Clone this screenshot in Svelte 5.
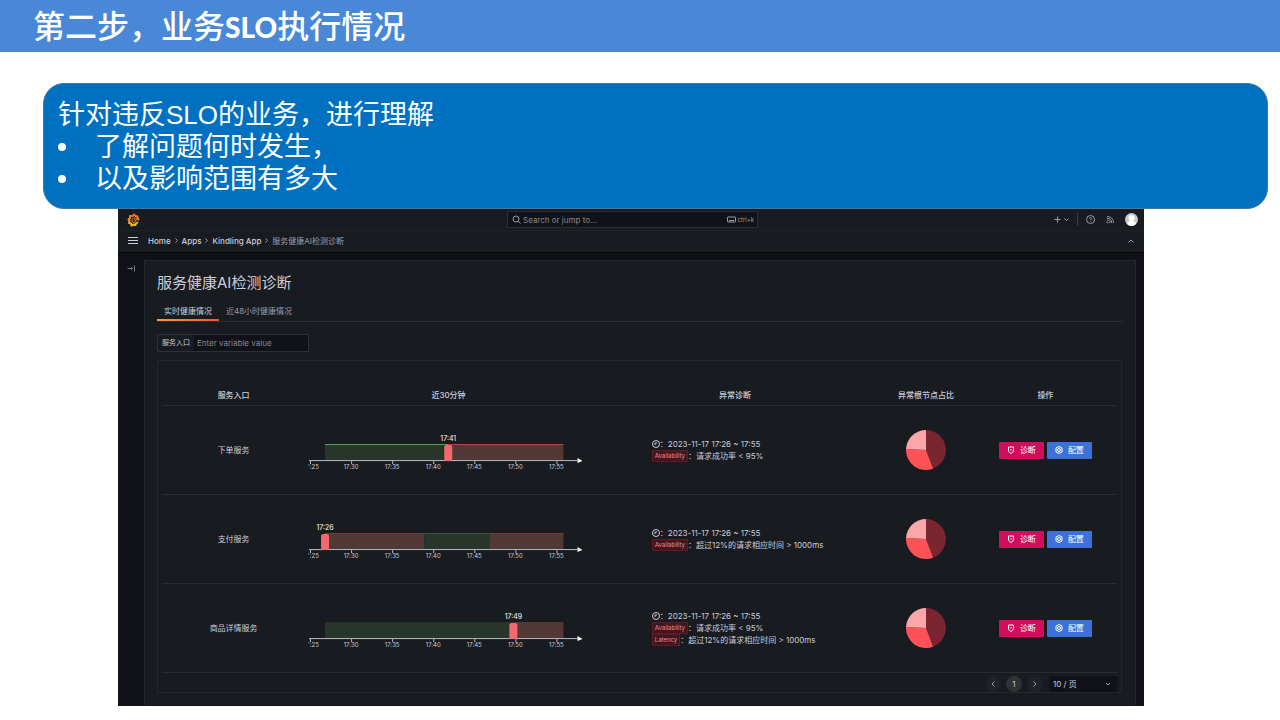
<script>
  const ticks = ["17:25", "17:30", "17:35", "17:40", "17:45", "17:50", "17:55"];

  const rows = [
    {
      name: "下单服务",
      at: "17:41",
      marker: 143,
      edge: 1,
      bands: [
        { from: 20, to: 143, ok: true },
        { from: 143, to: 258, ok: false },
      ],
      causes: [{ tag: "Availability", text: "请求成功率 < 95%" }],
    },
    {
      name: "支付服务",
      at: "17:26",
      marker: 20,
      edge: 0.35,
      bands: [
        { from: 20, to: 119, ok: false },
        { from: 119, to: 184, ok: true },
        { from: 184, to: 258, ok: false },
      ],
      causes: [{ tag: "Availability", text: "超过12%的请求相应时间 > 1000ms" }],
    },
    {
      name: "商品详情服务",
      at: "17:49",
      marker: 208,
      edge: 0,
      bands: [
        { from: 20, to: 208, ok: true },
        { from: 208, to: 258, ok: false },
      ],
      causes: [
        { tag: "Availability", text: "请求成功率 < 95%" },
        { tag: "Latency", text: "超过12%的请求相应时间 > 1000ms" },
      ],
    },
  ];

  let entry = $state("");
  let pageSize = $state("10");
</script>

<header class="banner">
  <h1>第二步，业务<span>SLO</span>执行情况</h1>
</header>

<section class="callout">
  <p>针对违反<span>SLO</span>的业务，进行理解</p>
  <ul>
    <li>了解问题何时发生，</li>
    <li>以及影响范围有多大</li>
  </ul>
</section>

<div class="app">
  <div class="topbar">
    <a class="logo" href="#home" aria-label="Grafana">
      <svg width="13" height="14" viewBox="0 0 26 28">
        <defs>
          <linearGradient id="flame" x1="0" y1="28" x2="0" y2="0" gradientUnits="userSpaceOnUse">
            <stop offset="0" stop-color="#fbca0a" />
            <stop offset="0.5" stop-color="#f7902a" />
            <stop offset="1" stop-color="#f05a28" />
          </linearGradient>
        </defs>
        <path
          fill="none"
          stroke="url(#flame)"
          stroke-width="4"
          stroke-linejoin="round"
          stroke-linecap="round"
          d="M21 19 L18 21 L17 24 L13 23 L9 25 L8 21 L4 20 L5 16 L3 13 L6 10 L6 6 L11 6 L14 3 L17 6 L21 7 L21 10 L23 13"
        />
        <path
          fill="none"
          stroke="url(#flame)"
          stroke-width="2"
          stroke-linecap="round"
          d="M20 13 C18 8 11 9 10 14 C9 19 16 21 18 16 C18 13 15 12 14 14"
        />
      </svg>
    </a>
    <label class="search">
      <svg width="9" height="9" viewBox="0 0 18 18" class="line">
        <circle cx="8" cy="8" r="6" />
        <path d="M12.500 12.500 L17 17" />
      </svg>
      <input type="search" placeholder="Search or jump to..." aria-label="Search or jump to" />
      <svg width="9" height="7" viewBox="0 0 18 14" class="line">
        <rect x="1" y="2" width="16" height="10" rx="1" />
        <path d="M4 9 H14" />
      </svg>
      <kbd>ctrl+k</kbd>
    </label>
    <div class="tools">
      <button class="add" aria-label="New">
        <svg width="7" height="7" viewBox="0 0 14 14" class="line"><path d="M7 1 V13 M1 7 H13" /></svg>
        <svg width="5" height="5" viewBox="0 0 10 10" class="line"><path d="M1 3 L5 7 L9 3" /></svg>
      </button>
      <i class="rule"></i>
      <button aria-label="Help">
        <svg width="9" height="9" viewBox="0 0 18 18" class="line">
          <circle cx="9" cy="9" r="8" />
          <path d="M7 7 C7 4.500 11 4.500 11 7 C11 9 9 8.500 9 10.500 M9 12.500 V13.500" />
        </svg>
      </button>
      <button aria-label="News">
        <svg width="8" height="8" viewBox="0 0 16 16" class="line">
          <path d="M2 8 C6 8 8 10 8 14 M2 4.500 C8 4.500 11.500 8 11.500 14 M2 1 C10 1 15 6 15 14" />
          <circle cx="3" cy="13" r="1" />
        </svg>
      </button>
      <button aria-label="Profile">
        <svg width="13" height="13" viewBox="0 0 26 26">
          <circle cx="13" cy="13" r="13" fill="#c8c8c8" />
          <circle cx="13" cy="10" r="6" fill="#fff" />
          <path d="M4 22 C5 17 9 16 13 16 C17 16 21 17 22 22 C17 27 9 27 4 22" fill="#fff" />
        </svg>
      </button>
    </div>
  </div>

  <nav class="crumbs" aria-label="Breadcrumb">
    <button aria-label="Menu">
      <svg width="10" height="7" viewBox="0 0 10 7" fill="#ccccdc">
        <path d="M0 0 H10 V1 H0 Z M0 3 H10 V4 H0 Z M0 6 H10 V7 H0 Z" />
      </svg>
    </button>
    {#each ["Home", "Apps", "Kindling App"] as crumb}
      <a href="#{crumb}">{crumb}</a>
      <svg width="3" height="5" viewBox="0 0 6 10" class="line"><path d="M1 1 L5 5 L1 9" /></svg>
    {/each}
    <span>服务健康AI检测诊断</span>
    <button class="fold" aria-label="Collapse">
      <svg width="6" height="6" viewBox="0 0 12 12" class="line"><path d="M1 9 L6 4 L11 9" /></svg>
    </button>
  </nav>

  <div class="body">
    <aside>
      <button aria-label="Open navigation">
        <svg width="8" height="7" viewBox="0 0 16 14" class="line dim">
          <path d="M1 7 H11 M8 4 L11 7 L8 10 M15 1 V13" />
        </svg>
      </button>
    </aside>

    <main>
      <h2>服务健康AI检测诊断</h2>

      <div class="tabs" role="tablist">
        <button role="tab" aria-selected="true" class="on">实时健康情况</button>
        <button role="tab" aria-selected="false">近48小时健康情况</button>
      </div>

      <div class="filter">
        <label for="entry">服务入口</label>
        <input id="entry" type="text" placeholder="Enter variable value" bind:value={entry} />
      </div>

      <section class="card">
        <table>
          <colgroup>
            <col class="w15" /><col class="w30" /><col class="w30" /><col class="w10" /><col class="w15" />
          </colgroup>
          <thead>
            <tr>
              <th>服务入口</th>
              <th>近30分钟</th>
              <th>异常诊断</th>
              <th>异常根节点占比</th>
              <th>操作</th>
            </tr>
          </thead>
          <tbody>
            {#each rows as row}
              <tr>
                <td>{row.name}</td>
                <td>
                  <svg class="timeline" viewBox="0 0 286 46">
                    {#each row.bands as band}
                      <rect x={band.from} y="17" width={band.to - band.from} height="16" fill={band.ok ? "#28352b" : "#533935"} />
                      <rect
                        x={band.from}
                        y="17"
                        width={band.to - band.from}
                        height="1"
                        fill={band.ok ? "#5fa156" : "#b0484a"}
                        opacity={row.edge}
                      />
                    {/each}
                    <rect x="4" y="33" width="268" height="1" fill="#b9b9c0" />
                    <path d="M272 31 L277 34 L272 36 Z" fill="#fff" />
                    <rect x={row.marker - 4} y="18" width="8" height="16" rx="2" fill="#f2686c" />
                    <text class="now" x={row.marker} y="14">{row.at}</text>
                    {#each ticks as tick, i}
                      <rect x={5 + i * 41} y="34" width="1" height="3" fill="#b9b9c0" />
                      {#if i === 0}
                        <text class="first" x="3" y="42">':25</text>
                      {:else}
                        <text x={5 + i * 41} y="42">{tick}</text>
                      {/if}
                    {/each}
                  </svg>
                </td>
                <td>
                  <div class="diagnosis">
                    <p>
                      <svg width="8" height="8" viewBox="0 0 16 16" class="clock">
                        <circle cx="8" cy="8" r="7" />
                        <path d="M4 8 H8 V4" />
                      </svg>：2023-11-17 17:26 ~ 17:55
                    </p>
                    {#each row.causes as cause}
                      <p><mark>{cause.tag}</mark>：{cause.text}</p>
                    {/each}
                  </div>
                </td>
                <td>
                  <svg class="pie" width="40" height="40" viewBox="-20 -20 40 40">
                    <path d="M0 0 V-20 A20 20 0 0 1 7 18.700 Z" fill="#7b2530" />
                    <path d="M0 0 L7 18.700 A20 20 0 0 1 -20 -1 Z" fill="#ff5257" />
                    <path d="M0 0 L-20 -1 A20 20 0 0 1 0 -20 Z" fill="#fba6a8" />
                  </svg>
                </td>
                <td>
                  <div class="actions">
                    <button class="diagnose">
                      <svg width="8" height="8" viewBox="0 0 16 16">
                        <path d="M3 2 H13 V8 C13 12 11 13 8 15 C5 13 3 12 3 8 Z M8 6 V9" />
                      </svg>
                      诊断
                    </button>
                    <button class="config">
                      <svg width="8" height="8" viewBox="0 0 16 16">
                        <path d="M8 1 L14 4 V12 L8 15 L2 12 V4 Z" />
                        <circle cx="8" cy="8" r="3" />
                      </svg>
                      配置
                    </button>
                  </div>
                </td>
              </tr>
            {/each}
          </tbody>
        </table>

        <div class="pager">
          <button aria-label="Previous page">
            <svg width="6" height="8" viewBox="0 0 12 16" class="line"><path d="M9 3 L4 8 L9 13" /></svg>
          </button>
          <button class="current" aria-current="page">1</button>
          <button aria-label="Next page">
            <svg width="6" height="8" viewBox="0 0 12 16" class="line"><path d="M3 3 L8 8 L3 13" /></svg>
          </button>
          <div class="size">
            <select aria-label="每页条数" bind:value={pageSize}>
              <option value="10">10 / 页</option>
            </select>
            <svg width="6" height="6" viewBox="0 0 12 12" class="line"><path d="M2 4 L6 8 L10 4" /></svg>
          </div>
        </div>
      </section>
    </main>
  </div>
</div>

<style>
  :global(body) {
    background: #fff;
  }
  * {
    box-sizing: border-box;
  }
  h1,
  h2,
  p,
  ul {
    margin: 0;
    padding: 0;
  }
  button,
  input,
  select {
    font: inherit;
    color: inherit;
    background: none;
    border: 0;
    padding: 0;
    margin: 0;
    outline: 0;
  }
  button {
    display: flex;
    align-items: center;
    justify-content: center;
  }
  a {
    color: inherit;
    text-decoration: none;
  }
  svg {
    flex: none;
    display: block;
  }
  .line {
    fill: none;
    stroke: #9a9ba5;
    stroke-width: 2;
  }
  .dim {
    stroke: #74757e;
  }

  .banner {
    height: 52px;
    padding: 2px 33px 0;
    display: flex;
    align-items: center;
    background: #4888d6;
  }
  h1 {
    font: 500 32px/50px "Liberation Sans", "Noto Sans CJK SC", sans-serif;
    color: #fff;
    white-space: nowrap;
  }
  h1 span {
    font-family: Lato, sans-serif;
    font-weight: 900;
    font-size: 28px;
  }
  .callout {
    margin: 31px 12px 0 43px;
    padding: 15px 15px 13px 14px;
    border: 1px solid #3c78ad;
    border-radius: 21px;
    background: #0070c0;
    color: #fff;
    font: 27px/32px "Liberation Sans", "Noto Sans CJK SC", sans-serif;
  }
  .callout p span {
    font-size: 26px;
  }
  .callout ul {
    list-style: none;
  }
  .callout li {
    display: flex;
    align-items: center;
    gap: 29px;
  }
  .callout li::before {
    content: "";
    width: 8px;
    height: 8px;
    border-radius: 50%;
    background: #fff;
  }

  .app {
    margin: 0 136px 0 118px;
    background: #111217;
    color: #ccccdc;
    font: 8px/12px Inter, "Noto Sans CJK SC", sans-serif;
  }
  .topbar {
    height: 22px;
    padding: 0 6px 0 9px;
    display: grid;
    grid-template-columns: 1fr 251px 1fr;
    align-items: center;
    background: #181b1f;
    border-bottom: 1px solid #1e2125;
  }
  .search {
    height: 17px;
    padding: 0 3px 0 4px;
    display: flex;
    align-items: center;
    gap: 2px;
    background: #111217;
    border: 1px solid #2b2d33;
    color: #9a9ba5;
  }
  .search input {
    flex: 1;
    min-width: 0;
  }
  input::placeholder {
    color: #85868f;
    opacity: 1;
  }
  kbd {
    font: 6px/12px Inter, sans-serif;
  }
  .tools {
    display: flex;
    align-items: center;
    justify-content: flex-end;
    gap: 11px;
  }
  .add {
    gap: 3px;
  }
  .rule {
    width: 1px;
    height: 13px;
    margin: 0 -3px;
    background: #3a3c42;
  }
  .crumbs {
    height: 22px;
    padding: 0 10px 2px;
    display: flex;
    align-items: center;
    gap: 4px;
    background: #181b1f;
    border-bottom: 1px solid #050608;
    font-weight: 500;
  }
  .crumbs a:first-of-type {
    margin-left: 6px;
  }
  .crumbs span {
    font-weight: 400;
    color: #9a9ba5;
  }
  .fold {
    margin-left: auto;
  }

  .body {
    display: flex;
    padding: 7px 8px 1px 0;
  }
  aside {
    width: 26px;
    padding: 5px 9px;
  }
  main {
    flex: 1;
    min-width: 0;
    padding: 12px 13px 12px 12px;
    background: #181b1f;
    border: 1px solid #25272c;
    border-bottom: 0;
  }
  h2 {
    font: 400 15px/20px Inter, "Noto Sans CJK SC", sans-serif;
  }
  .tabs {
    display: flex;
    height: 29px;
    align-items: flex-end;
    border-bottom: 1px solid #2c2e33;
  }
  .tabs button {
    height: 19px;
    padding: 0 7px;
    color: #9a9ba5;
    border-bottom: 2px solid transparent;
  }
  .tabs .on {
    color: #ccccdc;
    border-image: linear-gradient(90deg, #f79a4c, #f0583a) 1;
  }
  .filter {
    display: flex;
    width: 152px;
    height: 18px;
    margin: 12px 0 8px;
    border: 1px solid #2f3136;
    border-radius: 1px;
  }
  .filter label {
    flex: none;
    padding: 0 4px;
    font-size: 7px;
    line-height: 16px;
    width: 36px;
  }
  .filter input {
    flex: 1;
    min-width: 0;
    padding: 0 3px;
    background: #111217;
  }

  .card {
    padding: 0 4px;
    border: 1px solid #25272c;
  }
  table {
    width: 100%;
    table-layout: fixed;
    border-collapse: separate;
    border-spacing: 0;
  }
  .w10 {
    width: 10%;
  }
  .w15 {
    width: 15%;
  }
  .w30 {
    width: 30%;
  }
  th,
  td {
    padding: 0;
    text-align: center;
    font-weight: 400;
    border-bottom: 1px solid #2a2c31;
  }
  th {
    height: 45px;
    padding-top: 24px;
    font-weight: 500;
    white-space: nowrap;
  }
  td {
    height: 89px;
  }
  .timeline {
    width: 100%;
    height: auto;
  }
  .timeline text {
    font: 6px Inter, sans-serif;
    fill: #ccccdc;
    text-anchor: middle;
  }
  .timeline .first {
    text-anchor: start;
  }
  .timeline .now {
    font-size: 7px;
    fill: #fff;
  }
  .diagnosis {
    padding-left: 60px;
    text-align: left;
  }
  .diagnosis p {
    display: flex;
    align-items: center;
    white-space: nowrap;
  }
  .clock {
    fill: none;
    stroke: #ccccdc;
    stroke-width: 2;
  }
  mark {
    padding: 0 2px;
    font-size: 6px;
    line-height: 10px;
    color: #f08a94;
    background: #42161f;
    border: 1px solid #611b28;
  }
  .pie {
    margin: 0 auto;
  }
  .actions {
    display: flex;
    justify-content: center;
    gap: 3px;
  }
  .actions button {
    width: 45px;
    height: 17px;
    gap: 5px;
    border-radius: 1px;
    color: #fff;
  }
  .actions svg {
    fill: none;
    stroke: #fff;
    stroke-width: 2;
  }
  .diagnose {
    background: #d10e5c;
  }
  .config {
    background: #3d71d9;
  }
  .pager {
    display: flex;
    align-items: center;
    justify-content: flex-end;
    gap: 5px;
    height: 19px;
    padding-top: 2px;
  }
  .pager button {
    width: 16px;
    height: 16px;
    border-radius: 50%;
    background: #1f2226;
  }
  .pager .current {
    background: #303236;
  }
  .size {
    display: flex;
    align-items: center;
    width: 68px;
    height: 16px;
    margin-left: 1px;
    padding: 0 6px 0 4px;
    background: #111217;
  }
  .size select {
    flex: 1;
    min-width: 0;
    appearance: none;
  }
</style>
